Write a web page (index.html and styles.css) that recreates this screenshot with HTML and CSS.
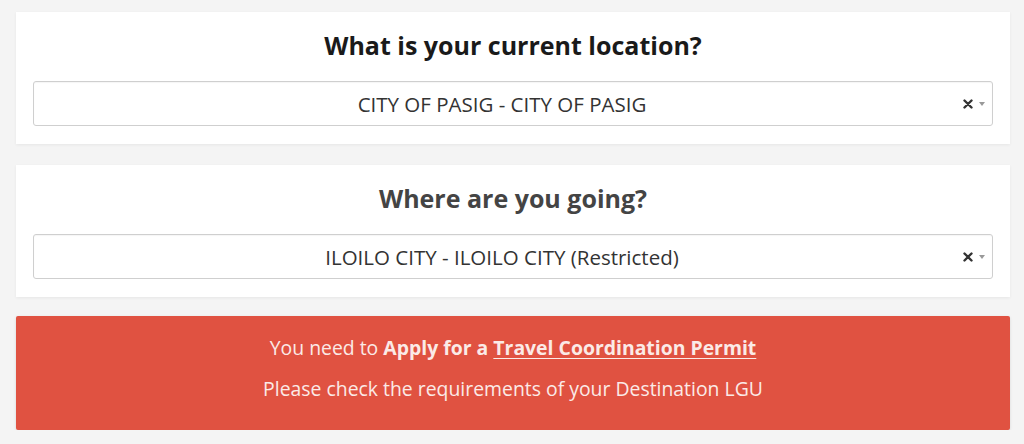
FILE: index.html
```html
<!DOCTYPE html>
<html>
<head>
<meta charset="utf-8">
<link rel="stylesheet" href="styles.css">
</head>
<body>
<div class="page">
  <div class="card">
    <h2 class="title dark">What is your current location?</h2>
    <div class="select">
      <span class="value">CITY OF PASIG - CITY OF PASIG</span>
      <span class="controls">
        <svg class="clear" width="10" height="10" viewBox="0 0 10 10"><path d="M1.5 1.5 L8.5 8.5 M8.5 1.5 L1.5 8.5" stroke="#333" stroke-width="2.4" stroke-linecap="round"/></svg>
        <svg class="caret" width="6" height="4" viewBox="0 0 6 4"><path d="M0 0 H6 L3 4 Z" fill="#999"/></svg>
      </span>
    </div>
  </div>
  <div class="card">
    <h2 class="title grey">Where are you going?</h2>
    <div class="select">
      <span class="value">ILOILO CITY - ILOILO CITY (Restricted)</span>
      <span class="controls">
        <svg class="clear" width="10" height="10" viewBox="0 0 10 10"><path d="M1.5 1.5 L8.5 8.5 M8.5 1.5 L1.5 8.5" stroke="#333" stroke-width="2.4" stroke-linecap="round"/></svg>
        <svg class="caret" width="6" height="4" viewBox="0 0 6 4"><path d="M0 0 H6 L3 4 Z" fill="#999"/></svg>
      </span>
    </div>
  </div>
  <div class="alert">
    <p class="line">You need to <b>Apply for a <a class="link" href="#">Travel Coordination Permit</a></b></p>
    <p class="line">Please check the requirements of your Destination LGU</p>
  </div>
</div>
</body>
</html>
```

FILE: styles.css
```css
html, body {
  margin: 0;
  padding: 0;
  background: #f4f4f4;
  font-family: "Open Sans", "Noto Sans", sans-serif;
}
.page {
  padding: 12px 14px 0 16px;
  display: flex;
  flex-direction: column;
  gap: 21px;
}
.card {
  background: #fff;
  box-shadow: 0 1px 3px rgba(0,0,0,0.06);
  padding: 18px 17px 18px;
  display: flex;
  flex-direction: column;
  align-items: stretch;
}
.title {
  margin: 0 0 21px;
  text-align: center;
  font-size: 25px;
  line-height: 30px;
  font-weight: 700;
}
.dark { color: #1a1a1a; }
.grey { color: #444; }
.select {
  height: 43px;
  border: 1px solid #cfcfcf;
  border-radius: 3px;
  box-shadow: inset 0 1px 1px rgba(0,0,0,0.04);
  display: flex;
  align-items: center;
  position: relative;
  padding-right: 22px;
}
.value {
  flex: 1;
  text-align: center;
  font-size: 20.5px;
  color: #333;
}
.controls {
  position: absolute;
  right: 7px;
  top: 0;
  bottom: 0;
  display: flex;
  align-items: center;
  gap: 6px;
}
.alert {
  margin-top: -2px;
  background: #e05241;
  border-radius: 2px;
  box-shadow: 0 1px 3px rgba(0,0,0,0.12);
  padding: 20px 16px 29px;
  color: #fbeae7;
  text-align: center;
  font-size: 19.4px;
}
.line {
  margin: 0;
  line-height: 24px;
}
.line + .line {
  margin-top: 17px;
}
.link {
  color: #fbeae7;
  text-decoration: underline;
  text-underline-offset: 3px;
}
```
